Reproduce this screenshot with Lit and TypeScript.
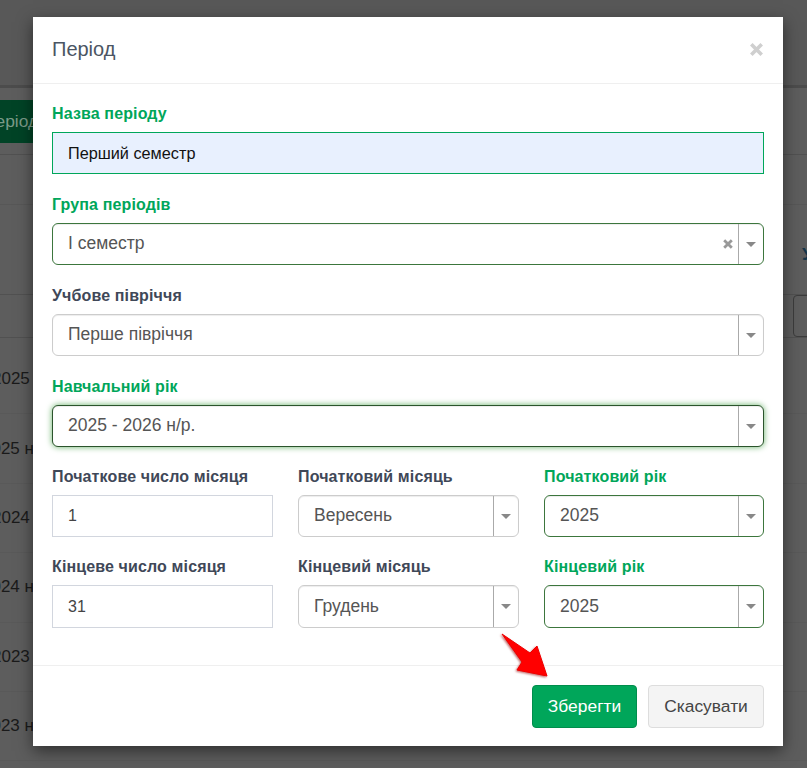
import { LitElement, html, css } from "lit";
import { customElement } from "lit/decorators.js";

@customElement("app-root")
export class AppRoot extends LitElement {
  static styles = css`
    :host { display: block; height: 768px; overflow: hidden; position: relative; font-family: "Liberation Sans", Arial, sans-serif; background: #5d5d5d; }
    .page { height: 768px; overflow: hidden; display: flex; flex-direction: column; color: #1a1a1a; font-size: 17px; }
    .topbar { height: 85px; flex: none; border-bottom: 3px solid #4c4c4c; background: #585858; box-sizing: content-box; }
    .toolbar { height: 67px; flex: none; border-bottom: 1px solid #515151; padding-top: 12px; box-sizing: border-box; }
    .green { width: 200px; height: 43px; margin-left: -30px; padding-left: 13px; box-sizing: border-box; background: #014326; color: #7a9a88; font-size: 17.4px; line-height: 43px; }
    .band { height: 50px; flex: none; border-bottom: 1px solid #575757; box-sizing: border-box; }
    .tabs { height: 90px; flex: none; padding: 39px 0 0 802px; box-sizing: border-box; border-bottom: 1px solid #515151; color: #14354a; font-size: 17.4px; font-weight: 700; white-space: nowrap; }
    .thead { height: 43px; flex: none; padding-left: 793px; box-sizing: border-box; border-bottom: 1px solid #515151; }
    .sidebox { width: 30px; height: 42px; border: 1px solid #3c3c3c; border-radius: 4px; box-sizing: border-box; }
    .rows { display: grid; grid-auto-rows: 69.4px; margin-top: 7px; }
    .row { display: flex; align-items: center; white-space: nowrap; border-bottom: 1px solid #595959; box-sizing: border-box; }
    .modal { position: absolute; left: 33px; top: 17px; width: 750px; height: 729px; background: #fff; box-shadow: 0 5px 15px rgba(0,0,0,.5); display: flex; flex-direction: column; }
    .head { height: 67px; flex: none; box-sizing: border-box; border-bottom: 1px solid #efefef; display: flex; align-items: center; justify-content: space-between; padding: 0 20px 2px 19px; }
    .title { font-size: 20px; color: #4b5563; }
    .close { display: block; }
    .body { flex: 1; padding: 20px 19px 0; display: flex; flex-direction: column; }
    .group { display: flex; flex-direction: column; height: 91px; }
    .label { flex: none; font-size: 16px; letter-spacing: .13px; font-weight: 700; color: #3f4858; height: 28px; line-height: 19px; white-space: nowrap; }
    .cols .label { height: 27px; line-height: 18px; }
    .ok { color: #00a65a; }
    .control { flex: none; height: 42px; box-sizing: border-box; font-size: 16px; display: flex; align-items: center; padding-left: 15px; border: 1px solid #d2d6de; color: #444; background: #fff; }
    .tall .control { height: 43px; }
    .named { background: #e8f0fe; border-color: #00a65a; color: #111; font-size: 16.25px; }
    .select { border-radius: 6px; border-color: #ccc; color: #555; padding-left: 0; font-size: 17.5px; box-shadow: inset 0 1px 1px rgba(0,0,0,.075); }
    .select.valid { border-color: #3c763d; }
    .select.focus { border-color: #2b542c; box-shadow: inset 0 1px 1px rgba(0,0,0,.075), 0 0 6px #67b168; }
    .value { flex: 1; padding-left: 15px; margin-bottom: 2px; white-space: nowrap; }
    .tall .value { margin-bottom: 0; }
    .x { display: block; flex: none; margin-right: 5px; }
    .arrow { flex: none; width: 25px; height: 100%; box-sizing: border-box; border-left: 1px solid #aaa; display: flex; align-items: center; justify-content: center; }
    .tri { width: 0; height: 0; border-left: 5px solid transparent; border-right: 5px solid transparent; border-top: 5px solid #888; }
    .cols { display: grid; grid-template-columns: 221px 221px 220px; grid-template-rows: 90px 91px; column-gap: 25px; }
    .foot { flex: none; height: 81px; box-sizing: border-box; border-top: 1px solid #efefef; display: flex; align-items: flex-start; justify-content: flex-end; gap: 11px; padding: 19px 19px 0; }
    .btn { height: 43px; box-sizing: border-box; border-radius: 4px; font-size: 17.4px; display: flex; align-items: center; justify-content: center; border: 1px solid; }
    .save { width: 105px; background: #00a65a; border-color: #008d4c; color: #fff; }
    .cancel { width: 116px; background: #f4f4f4; border-color: #ddd; color: #444; }
    .pointer { position: absolute; left: 468px; top: 616px; filter: drop-shadow(-1px 1px 1px rgba(150,0,0,.6)); }
  `;

  private select(value: string, cls = "", clear = false) {
    return html`<div class="control select ${cls}"><span class="value">${value}</span>${clear
        ? html`<svg class="x" width="10" height="10" viewBox="0 0 10 10"><path d="M1.2 1.2 8.8 8.8M8.8 1.2 1.2 8.8" stroke="#999" stroke-width="2.8" fill="none"/></svg>`
        : ""}<span class="arrow"><span class="tri"></span></span></div>`;
  }

  render() {
    const rows: [string, number][] = [["2025", -8], ["2025 н", -18], ["2024", -8], ["2024 н", -18], ["2023", -8], ["2023 н", -18]];
    return html`
      <div class="page">
        <div class="topbar"></div>
        <div class="toolbar"><div class="green">Період</div></div>
        <div class="band"></div>
        <div class="tabs">У</div>
        <div class="thead"><div class="sidebox"></div></div>
        <div class="rows">
          ${rows.map(([t, off]) => html`<div class="row"><span style="margin-left:${off}px">${t}</span></div>`)}
        </div>
      </div>
      <div class="modal">
        <div class="head">
          <span class="title">Період</span>
          <svg class="close" width="13" height="13" viewBox="0 0 13 13"><path d="M1.3 1.3 11.7 11.7M11.7 1.3 1.3 11.7" stroke="#cfcfcf" stroke-width="3.6" fill="none"/></svg>
        </div>
        <div class="body">
          <div class="group"><span class="label ok">Назва періоду</span><div class="control named">Перший семестр</div></div>
          <div class="group"><span class="label ok">Група періодів</span>${this.select("І семестр", "valid", true)}</div>
          <div class="group"><span class="label">Учбове півріччя</span>${this.select("Перше півріччя")}</div>
          <div class="group"><span class="label ok">Навчальний рік</span>${this.select("2025 - 2026 н/р.", "valid focus")}</div>
          <div class="cols">
            <div class="group"><span class="label">Початкове число місяця</span><div class="control">1</div></div>
            <div class="group"><span class="label">Початковий місяць</span>${this.select("Вересень")}</div>
            <div class="group"><span class="label ok">Початковий рік</span>${this.select("2025", "valid")}</div>
            <div class="group tall"><span class="label">Кінцеве число місяця</span><div class="control">31</div></div>
            <div class="group tall"><span class="label">Кінцевий місяць</span>${this.select("Грудень")}</div>
            <div class="group tall"><span class="label ok">Кінцевий рік</span>${this.select("2025", "valid")}</div>
          </div>
        </div>
        <div class="foot"><div class="btn save">Зберегти</div><div class="btn cancel">Скасувати</div></div>
        <svg class="pointer" width="50" height="46" viewBox="0 0 50 46"><path d="M1 1 29 20 36 13 46 43 16 37 21 29Z" fill="#f00" stroke="#e00" stroke-width="1" stroke-linejoin="round"/></svg>
      </div>`;
  }
}
